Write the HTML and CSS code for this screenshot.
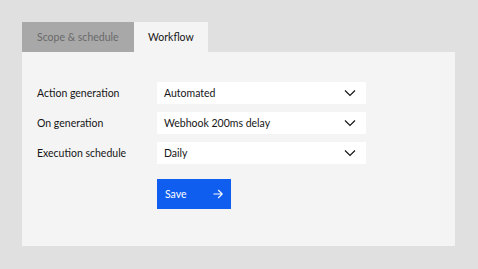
FILE: index.html
```html
<!DOCTYPE html>
<html>
<head>
<meta charset="utf-8">
<link rel="stylesheet" href="styles.css">
</head>
<body>
<div class="tabs">
  <div class="tab tab-inactive">Scope &amp; schedule</div>
  <div class="tab tab-active">Workflow</div>
</div>
<div class="panel">
  <div class="row">
    <div class="label">Action generation</div>
    <div class="select"><span>Automated</span>
      <svg class="chev" width="12" height="8" viewBox="0 0 12 8"><path d="M1 1.5 L6 6.5 L11 1.5" fill="none" stroke="#161616" stroke-width="1.2"/></svg>
    </div>
  </div>
  <div class="row">
    <div class="label">On generation</div>
    <div class="select"><span>Webhook 200ms delay</span>
      <svg class="chev" width="12" height="8" viewBox="0 0 12 8"><path d="M1 1.5 L6 6.5 L11 1.5" fill="none" stroke="#161616" stroke-width="1.2"/></svg>
    </div>
  </div>
  <div class="row">
    <div class="label">Execution schedule</div>
    <div class="select"><span>Daily</span>
      <svg class="chev" width="12" height="8" viewBox="0 0 12 8"><path d="M1 1.5 L6 6.5 L11 1.5" fill="none" stroke="#161616" stroke-width="1.2"/></svg>
    </div>
  </div>
  <div class="actions">
    <button class="save"><span>Save</span>
      <svg width="10" height="10" viewBox="0 0 10 10"><path d="M0.5 5 H9.2 M5.2 1 L9.2 5 L5.2 9" fill="none" stroke="#ffffff" stroke-width="1.1"/></svg>
    </button>
  </div>
</div>
</body>
</html>
```

FILE: styles.css
```css
html, body {
  margin: 0;
  padding: 0;
}
body {
  background: #e0e0e0;
  width: 478px;
  height: 269px;
  box-sizing: border-box;
  padding: 22px 23px 0 22px;
  font-family: Lato, "Noto Sans", sans-serif;
  font-size: 10.5px;
  color: #161616;
}
.tabs {
  display: flex;
  height: 30px;
}
.tab {
  display: flex;
  align-items: center;
  box-sizing: border-box;
  white-space: nowrap;
}
.tab-inactive {
  width: 112px;
  padding-left: 15px;
  background: #a8a8a8;
  color: #6a6a6a;
}
.tab-active {
  width: 74px;
  padding-left: 14px;
  background: #f4f4f4;
  color: #161616;
}
.panel {
  background: #f4f4f4;
  height: 194px;
  box-sizing: border-box;
  padding: 30px 15px 0 15px;
  display: flex;
  flex-direction: column;
  gap: 8px;
}
.row {
  display: flex;
  align-items: center;
  height: 22px;
}
.label {
  width: 120px;
  flex: none;
  white-space: nowrap;
}
.select {
  width: 209px;
  height: 22px;
  background: #ffffff;
  display: flex;
  align-items: center;
  justify-content: space-between;
  box-sizing: border-box;
  padding: 0 10px 0 7px;
  white-space: nowrap;
}
.chev {
  display: block;
}
.actions {
  padding-left: 120px;
  margin-top: 7px;
}
.save {
  width: 74px;
  height: 30px;
  background: #0f5eef;
  border: none;
  color: #ffffff;
  font-family: inherit;
  font-size: 10.5px;
  display: flex;
  align-items: center;
  justify-content: space-between;
  padding: 0 8px 0 8px;
  box-sizing: border-box;
}
.save svg {
  display: block;
}
```
